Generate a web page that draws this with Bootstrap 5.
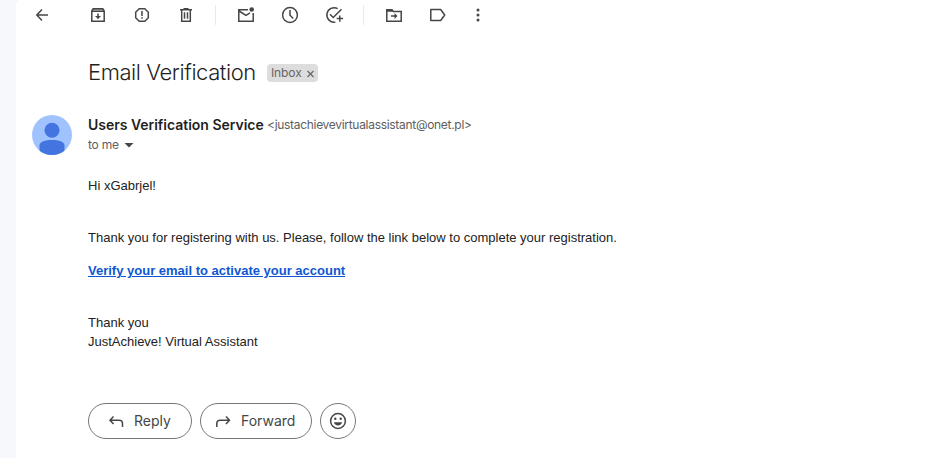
<!DOCTYPE html>
<html lang="en">
<head>
<meta charset="utf-8">
<meta name="viewport" content="width=device-width, initial-scale=1">
<title>Email Verification</title>
<link rel="stylesheet" href="https://cdn.jsdelivr.net/npm/bootstrap@5.3.0/dist/css/bootstrap.min.css">
<style>
body{background:#f6f8fc;font-family:Inter,Roboto,sans-serif;color:#1f1f1f;height:458px;overflow:hidden}
.mail-panel{margin-left:16px;height:458px;border-top-left-radius:5px;padding-left:16px}
.tool-row{height:30px}
.tool-row button{width:20px;height:20px;color:#444746}
.tool-row svg,.reply-row svg{display:block}
.tool-gap{margin-left:36px}
.tool-more{margin-left:20px}
.tool-sep{width:1px;height:20px;background:#e9eaeb;margin:0 20px 0 19px}
.indent{margin-left:56px}
.subject-row{height:28px;margin-top:28px}
.subject{font-size:22px;line-height:28px;font-weight:350;letter-spacing:-.43px;width:179px}
.inbox-chip{background:#ddd;color:#666;height:18px;width:51px;font-size:12px;line-height:18px;border-radius:4px;padding-left:4px;margin-top:2px}
.chip-label{letter-spacing:-.1px}
.sender-row{margin-top:29px;height:40px}
.avatar-box{width:56px}
.sender-lines{line-height:20px}
.sender{font-size:14px;font-weight:600;letter-spacing:-.02px;width:179px}
.address{font-size:12px;letter-spacing:-.3px;color:#5e5e5e}
.to-me{font-size:12px;color:#5e5e5e}
.to-label{letter-spacing:-.2px}
.message{font-family:"Liberation Sans",Arial,sans-serif;font-size:13px;line-height:19px;color:#222;margin-top:21px}
.message a{color:#0f57d2;font-weight:700}
.message p{margin:0}
.para-2{padding-top:33px}
.para-3{padding-top:14px}
.reply-row{margin-top:52px;gap:8px}
.reply-row .btn{height:36px;border:1px solid #747775;border-radius:18px;color:#444746;font-size:14px;line-height:20px;padding:0 0 0 17px;gap:8px}
.btn-reply{width:104px}.btn-forward{width:112px}
.reply-row .btn-forward{padding-left:12px}
.reply-row .btn-emoji{width:36px;padding:0}
</style>
<script src="https://cdn.jsdelivr.net/npm/bootstrap@5.3.0/dist/js/bootstrap.bundle.min.js"></script>
</head>
<body>
<main class="mail-panel bg-white">
  <div class="tool-row d-flex align-items-center" role="toolbar">
    <button class="btn p-0 border-0" aria-label="Back"><svg width="20" height="20" fill="none" stroke="currentColor" stroke-width="1.5"><path d="M16 10H5M10 4.500 4.800 10l5.200 5.500"/></svg></button>
    <button class="btn p-0 border-0 tool-gap" aria-label="Archive"><svg width="20" height="20" fill="none" stroke="currentColor" stroke-width="1.5"><path d="M3.800 6 5.200 3.800h9.600L16.200 6v10.200H3.800zM3.800 6.200h12.400M10 8.500v5"/><path d="M7 11h6l-3 3z" fill="currentColor" stroke="none"/><path d="M4.800 4.700h10.400" stroke-opacity=".5"/></svg></button>
    <button class="btn p-0 border-0 ms-4" aria-label="Report spam"><svg width="20" height="20" fill="none" stroke="currentColor" stroke-width="1.5"><path d="M7.200 3.800h5.600l3.500 3.500v5.400l-3.500 3.500H7.200l-3.500-3.500V7.300zM10 6v5M10 12.200v1.600"/></svg></button>
    <button class="btn p-0 border-0 ms-4" aria-label="Delete"><svg width="20" height="20" fill="none" stroke="currentColor" stroke-width="1.5"><path d="M4 4.700h12M7.500 3.700h5M5.700 5v11.200h8.600V5M8.500 7.300v6.500M11.500 7.300v6.500"/></svg></button>
    <span class="tool-sep"></span>
    <button class="btn p-0 border-0" aria-label="Mark as unread"><svg width="20" height="20" fill="none" stroke="currentColor" stroke-width="1.5"><path d="M12 4.800H2.800v11.400h14.400V8M3 6l7 4.400 4-2.500"/><circle cx="15.700" cy="4.500" r="2.300" fill="currentColor" stroke="none"/></svg></button>
    <button class="btn p-0 border-0 ms-4" aria-label="Snooze"><svg width="20" height="20" fill="none" stroke="currentColor" stroke-width="1.5"><circle cx="10" cy="10" r="7.400"/><path d="M10 5v5.300l3.200 3.200"/></svg></button>
    <button class="btn p-0 border-0 ms-4" aria-label="Add to tasks"><svg width="22" height="20" fill="none" stroke="currentColor" stroke-width="1.5"><path d="M13.700 3.600A7.300 7.300 0 1 0 11.300 17.200M6 9.300l3.200 3.200 8.300-8.300M15.800 10.500v6.200M12.700 13.600h6.400"/></svg></button>
    <span class="tool-sep"></span>
    <button class="btn p-0 border-0" aria-label="Move to"><svg width="20" height="20" fill="none" stroke="currentColor" stroke-width="1.5"><path d="M2.800 4.800h5l1.600 1.700h7.800v9.700H2.800zM7 11h5"/><path d="M2.500 4.200h5.700l1.700 2.500H2.500zM10.500 8l3 3-3 3z" fill="currentColor" stroke="none"/></svg></button>
    <button class="btn p-0 border-0 ms-4" aria-label="Labels"><svg width="20" height="20" fill="none" stroke="currentColor" stroke-width="1.5" stroke-linejoin="round"><path d="M2.800 4.500h9.900l4 5.500-4 5.500H2.800z"/></svg></button>
    <button class="btn p-0 border-0 tool-more" aria-label="More"><svg width="20" height="20" fill="currentColor"><circle cx="10" cy="5" r="1.500"/><circle cx="10" cy="10" r="1.500"/><circle cx="10" cy="15" r="1.500"/></svg></button>
  </div>

  <div class="subject-row indent d-flex align-items-center">
    <h1 class="subject m-0 text-nowrap">Email Verification</h1>
    <span class="inbox-chip d-flex align-items-center"><span class="chip-label">Inbox</span><svg class="ms-1" width="9" height="9" fill="none" stroke="currentColor" stroke-width="1.2"><path d="M1.500 2l6 6M7.500 2l-6 6"/></svg></span>
  </div>

  <div class="sender-row d-flex">
    <div class="avatar-box"><svg class="d-block" width="40" height="40"><defs><clipPath id="disc"><circle cx="20" cy="20" r="20"/></clipPath></defs><g clip-path="url(#disc)"><path fill="#a0c3ff" d="M0 0h40v40H0z"/><circle cx="20" cy="15.300" r="7.500" fill="#4374e0"/><path fill="#4374e0" d="M7.500 40V30.500c0-4 6-5.500 12.500-5.500s12.500 1.500 12.500 5.500V40z"/></g></svg></div>
    <div class="sender-lines text-nowrap">
      <div class="d-flex"><span class="sender">Users Verification Service</span><span class="address">&lt;justachievevirtualassistant@onet.pl&gt;</span></div>
      <div class="d-flex align-items-center to-me"><span class="to-label">to me</span><svg class="ms-1" width="12" height="8" fill="#444746"><path d="M1.500 2h9L6 6.500z"/></svg></div>
    </div>
  </div>

  <article class="message indent text-nowrap">
    <p>Hi xGabrjel!</p>
    <p class="para-2">Thank you for registering with us. Please, follow the link below to complete your registration.</p>
    <p class="para-3"><a href="#">Verify your email to activate your account</a></p>
    <p class="para-2">Thank you<br>JustAchieve! Virtual Assistant</p>
  </article>

  <div class="reply-row indent d-flex">
    <button class="btn btn-reply d-flex align-items-center"><svg width="20" height="20" fill="none" stroke="currentColor" stroke-width="1.5"><path d="M7.500 5.500 4 9.300l3.500 3.700M4 9.300h9q3.500 0 3.500 3.200V16"/></svg><span class="reply-label">Reply</span></button>
    <button class="btn btn-forward d-flex align-items-center"><svg width="20" height="20" fill="none" stroke="currentColor" stroke-width="1.5"><path d="M13 5.500l3.500 3.800L13 13M16.500 9.300H7.300q-3.500 0-3.500 3.200V16"/></svg><span class="forward-label">Forward</span></button>
    <button class="btn btn-emoji d-flex align-items-center justify-content-center" aria-label="Add reaction"><svg width="20" height="20" fill="none" stroke="currentColor" stroke-width="1.5"><circle cx="10" cy="10" r="7.400"/><g fill="currentColor" stroke="none"><circle cx="7.300" cy="7.800" r="1.200"/><circle cx="12.700" cy="7.800" r="1.200"/><path d="M5.800 11.300h8.400a4.400 4.400 0 0 1-8.400 0z"/></g></svg></button>
  </div>
</main>
</body>
</html>
